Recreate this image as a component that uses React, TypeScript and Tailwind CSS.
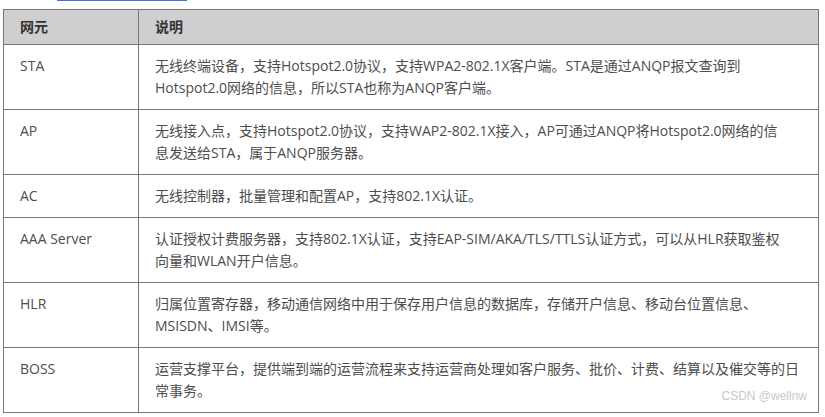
import React from 'react';

const rows: { name: string; lines: string[] }[] = [
  {
    name: 'STA',
    lines: [
      '无线终端设备，支持Hotspot2.0协议，支持WPA2-802.1X客户端。STA是通过ANQP报文查询到',
      'Hotspot2.0网络的信息，所以STA也称为ANQP客户端。',
    ],
  },
  {
    name: 'AP',
    lines: [
      '无线接入点，支持Hotspot2.0协议，支持WAP2-802.1X接入，AP可通过ANQP将Hotspot2.0网络的信',
      '息发送给STA，属于ANQP服务器。',
    ],
  },
  { name: 'AC', lines: ['无线控制器，批量管理和配置AP，支持802.1X认证。'] },
  {
    name: 'AAA Server',
    lines: [
      '认证授权计费服务器，支持802.1X认证，支持EAP-SIM/AKA/TLS/TTLS认证方式，可以从HLR获取鉴权',
      '向量和WLAN开户信息。',
    ],
  },
  {
    name: 'HLR',
    lines: [
      '归属位置寄存器，移动通信网络中用于保存用户信息的数据库，存储开户信息、移动台位置信息、',
      'MSISDN、IMSI等。',
    ],
  },
  {
    name: 'BOSS',
    lines: [
      '运营支撑平台，提供端到端的运营流程来支持运营商处理如客户服务、批价、计费、结算以及催交等的日',
      '常事务。',
    ],
  },
];

export default function App() {
  return (
    <div className="relative w-[825px] h-[417px] overflow-hidden bg-white font-['Open_Sans','Noto_Sans_CJK_SC',sans-serif] text-[14px] leading-[22px] text-[#4d4d4d]">
      {/* link underline cut off at the top */}
      <div className="ml-[57px] w-[130px] h-px bg-[#3f74e0]" />

      <table className="mt-[8px] ml-[3px] w-[816px] border-collapse">
        <colgroup>
          <col className="w-[135px]" />
          <col />
        </colgroup>
        <thead>
          <tr className="bg-[#cfcfcf]">
            <th className="border border-[#777] px-[16px] py-[6px] text-left font-bold text-[#333]">网元</th>
            <th className="border border-[#777] px-[16px] py-[6px] text-left font-bold text-[#333]">说明</th>
          </tr>
        </thead>
        <tbody>
          {rows.map((r) => (
            <tr key={r.name}>
              <td className="border border-[#777] px-[16px] py-[10px] align-top whitespace-nowrap">{r.name}</td>
              <td className="border border-[#777] px-[16px] py-[10px] align-top whitespace-nowrap">
                {r.lines.map((l, i) => (
                  <div key={i}>{l}</div>
                ))}
              </td>
            </tr>
          ))}
        </tbody>
      </table>

      {/* watermark */}
      <div className="absolute right-[18px] bottom-[15px] font-['Liberation_Sans',sans-serif] text-[12px] leading-none text-[#cacaca]">
        CSDN @wellnw
      </div>
    </div>
  );
}
